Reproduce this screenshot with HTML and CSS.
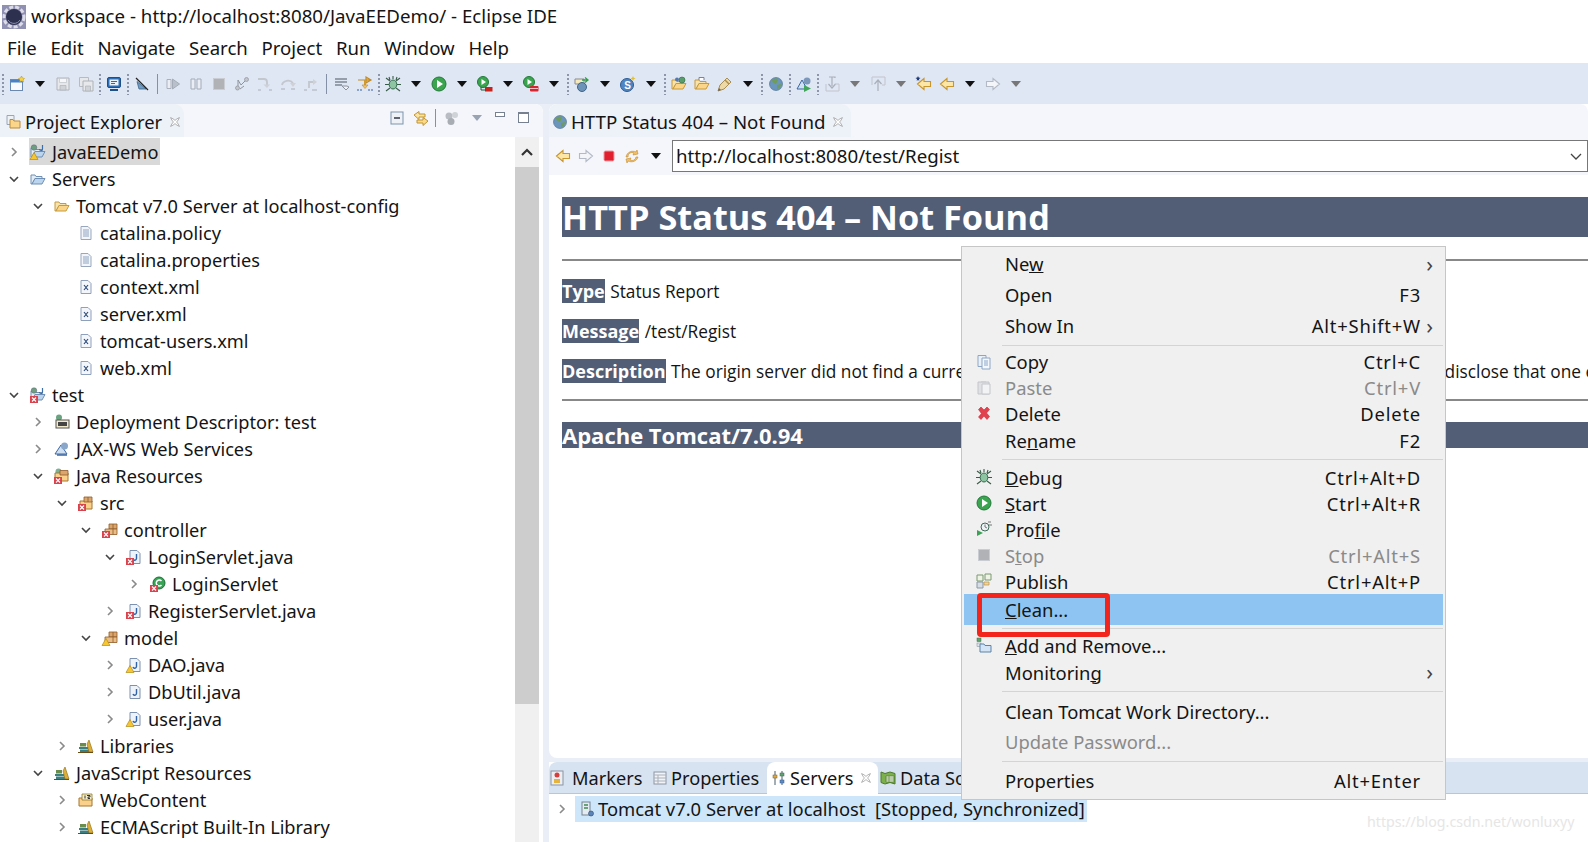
FILE: index.html
```html
<!DOCTYPE html>
<html lang="en">
<head>
<meta charset="utf-8">
<title>workspace - Eclipse IDE</title>
<link rel="stylesheet" href="styles.css">
</head>
<body>
<svg class="defs" width="0" height="0" aria-hidden="true">
<defs>
<g id="chev-r"><path d="M6 4l4 4-4 4" fill="none" stroke="#8a8a8a" stroke-width="1.6"/></g>
<g id="chev-d"><path d="M4 6l4 4 4-4" fill="none" stroke="#444" stroke-width="1.6"/></g>
<g id="err"><rect x="0" y="9" width="8" height="7" fill="#d9434e"/><path d="M2 10.500l4 4m0-4l-4 4" stroke="#fff" stroke-width="1.100"/></g>
<g id="warn"><path d="M4 8.500L8 15.500H0z" fill="#f6c733" stroke="#b58a10" stroke-width=".7"/></g>
<g id="fold-y"><path d="M1 13V4h4l1 1.500h6v2H5L2 13z" fill="#f7e3ad" stroke="#c79a3c"/><path d="M2 13l3-5.500h10L12 13z" fill="#fbd68a" stroke="#c79a3c"/></g>
<g id="fold-b"><path d="M1 13V4h4l1 1.500h6v2H5L2 13z" fill="#e3edf8" stroke="#6f8fb4"/><path d="M2 13l3-5.500h10L12 13z" fill="#bcd5ef" stroke="#6f8fb4"/></g>
<g id="proj"><use href="#fold-b"/><circle cx="4" cy="3.500" r="2.800" fill="#6d9e7f" stroke="#557" stroke-width=".4"/><path d="M12.500 1v4a1.500 1.500 0 0 1-3 0" fill="none" stroke="#3e6ea8" stroke-width="1.200"/></g>
<g id="txt"><path d="M3 1.500h7l3 3v10H3z" fill="#f2f5fa" stroke="#98a7bd"/><path d="M5 5h6M5 7h6M5 9h6M5 11h6" stroke="#8ea4c2"/></g>
<g id="xml"><path d="M3 1.500h7l3 3v10H3z" fill="#f3f6fb" stroke="#8ea0bb"/><path d="M6 6l4 5m0-5l-4 5" stroke="#2d4a78" stroke-width="1.200"/></g>
<g id="dd"><circle cx="5" cy="3.500" r="3" fill="#6aa37f"/><rect x="2" y="6" width="13" height="8" fill="#f2e9c8" stroke="#555"/><rect x="4" y="8" width="9" height="4" fill="#444"/></g>
<g id="ws"><path d="M1 13L7 4l6 9z" fill="#cfe0f3" stroke="#3b66a3"/><circle cx="10.500" cy="5" r="3.500" fill="#8aa6c8"/><path d="M3 14h10" stroke="#3b66a3" stroke-width="1.500"/></g>
<g id="box"><path d="M7 2h8v5h-8z" fill="#dba66d" stroke="#8f5a2a" stroke-width=".8"/><path d="M3 7h12v5.500H3z" fill="#e9bd87" stroke="#8f5a2a" stroke-width=".8"/><path d="M11 2v10.500" stroke="#8f5a2a" stroke-width=".8"/></g>
<g id="jres"><circle cx="4.500" cy="3.500" r="3" fill="#7bb196"/><path d="M1 13V5h13v8z" fill="#fad08a" stroke="#a87631"/><path d="M6 2.500h8V7H6z" fill="#dba66d" stroke="#8f5a2a" stroke-width=".8"/></g>
<g id="src"><path d="M2 14V6h12v8z" fill="#fad08a" stroke="#a87631"/><path d="M6 2h8v5H6z" fill="#dba66d" stroke="#8f5a2a" stroke-width=".8"/><path d="M10 2v5" stroke="#8f5a2a" stroke-width=".8"/></g>
<g id="java"><path d="M4 1.500h7l3 3v10H4z" fill="#eef3fa" stroke="#7d90ae"/><path d="M10.500 5v4.500a1.800 1.800 0 0 1-3.500 .5" fill="none" stroke="#2f62a8" stroke-width="1.400"/></g>
<g id="cls"><circle cx="9" cy="7" r="6" fill="#37a354" stroke="#1c6f34"/><path d="M11.500 5a3 3 0 1 0 0 4" fill="none" stroke="#fff" stroke-width="1.500"/></g>
<g id="lib"><path d="M1 9h9v2H1zM2 11.500h9V14H2z" fill="#3b7f80"/><path d="M2 5h6v3.500H2z" fill="#6a8c4c"/><path d="M11 2l4 12h-4l-2-8z" fill="#ddae3a" stroke="#8a6a14" stroke-width=".6"/><path d="M0 14.500h15" stroke="#6a4a15"/></g>
<g id="jsf"><path d="M1 14V6h13v8z" fill="#fad08a" stroke="#a87631"/><path d="M4 2h10v6H4z" fill="#f4ecc9" stroke="#8f7a2a" stroke-width=".8"/><path d="M7 3.500v3M9 3.500h3v1.500h-2v1.500h2" fill="none" stroke="#333" stroke-width="1"/></g>
<g id="srvr"><rect x="3" y="1" width="8" height="13" fill="#e5ebf2" stroke="#75838f"/><path d="M5 4h4M5 7h4" stroke="#3e8a52" stroke-width="1.400"/><circle cx="12" cy="12.500" r="2.500" fill="#5b84b8" stroke="#2e4a70" stroke-width=".6"/></g>
<g id="close"><path d="M2.500 2.500l3 1.500 2.500 2 2.500-2 3-1.500-1.500 3-2 2.500 2 2.500 1.500 3-3-1.500-2.500-2-2.500 2-3 1.500 1.500-3 2-2.500-2-2.500z" fill="#fff" stroke="#8b8b8b" stroke-width=".8"/></g>
<g id="pe"><path d="M2 1.500h7v9H2z" fill="#eef1f6" stroke="#9aa6b5"/><path d="M5 8V5.500h3l1 1.500h6v7H5z" fill="#fbd68a" stroke="#b98b36"/></g>
<g id="globe"><circle cx="8" cy="8" r="6.500" fill="#6b96bc" stroke="#45688c" stroke-width=".6"/><path d="M4 4l4-2 2 2-2 4-3-1zM9 9l4-1-1 4-3 1z" fill="#6f9c58"/></g>
<g id="back"><path d="M1.500 8L8 2.500V5.500h6.500v5H8v3z" fill="#fde7a8" stroke="#c7962d" stroke-width="1.100"/></g>
<g id="fwd"><path d="M14.500 8L8 2.500V5.500H1.500v5H8v3z" fill="#f3f5f9" stroke="#b3bac6" stroke-width="1.100"/></g>
<g id="refresh"><path d="M4 9a4 4 0 0 1 6-4l-1 2 5-1-1-4-1 2C8 2 3 4 2 9z" fill="#f4c067" stroke="#c38a2c" stroke-width=".6"/><path d="M12 9a4 4 0 0 1-6 3l1-2-5 1 1 4 1-2c4 2 9 0 10-4z" fill="#f4c067" stroke="#c38a2c" stroke-width=".6"/></g>
<g id="stoprd"><rect x="3" y="3" width="10" height="10" rx="1.500" fill="#e0202e" stroke="#f09aa0"/></g>
<g id="newwiz"><rect x="1.500" y="3.500" width="12" height="11" fill="#f7f9fc" stroke="#6a89b0"/><path d="M1.500 4h12v2.500h-12z" fill="#4a81c4"/><path d="M12.500 0l1 2 2 .5-1.500 1.500.5 2-2-1-2 1 .5-2L9.500 2.500l2-.5z" fill="#f6d44a" stroke="#b48d18" stroke-width=".5"/></g>
<g id="save"><path d="M2 2h12v12H2z" fill="#e6e8ec" stroke="#b0b4ba"/><path d="M4.500 2.500h7v4h-7z" fill="#f6f7f9" stroke="#c0c4ca" stroke-width=".7"/><path d="M5 9.500h6V14H5z" fill="#d0d3d8" stroke="#b0b4ba" stroke-width=".7"/></g>
<g id="saveall"><path d="M1.500 1.500h9v9h-9z" fill="#e6e8ec" stroke="#b8bcc2"/><path d="M5 5h10v10H5z" fill="#e6e8ec" stroke="#aeb2b8"/><path d="M7.500 10h5v5h-5z" fill="#d0d3d8" stroke="#b0b4ba" stroke-width=".7"/></g>
<g id="monitor"><rect x="1.500" y="1.500" width="13" height="10" rx="1.500" fill="#2c6db4" stroke="#1d4f88"/><rect x="3.500" y="3.500" width="9" height="6" fill="#eaf1f9"/><path d="M5 5.500h6M5 7.500h4" stroke="#2c6db4"/><path d="M4 14h8" stroke="#1d4f88" stroke-width="2"/></g>
<g id="skip"><path d="M3 5.500L12 13 5 13z" fill="#6f9cc4" stroke="#3b6488" stroke-width=".8"/><path d="M2 2l12 12" stroke="#222" stroke-width="1.300"/></g>
<g id="resume"><path d="M2 3.500h4v9H2z" fill="#eaedf3" stroke="#aab1bd"/><path d="M7.500 3l7 5-7 5z" fill="#b9c0cb" stroke="#a4acb8"/></g>
<g id="suspend"><path d="M3 3h4v10H3zM9 3h4v10H9z" fill="#eaedf3" stroke="#a4acb8"/></g>
<g id="stopg"><rect x="2.500" y="2.500" width="11" height="11" fill="#b0b2b6" stroke="#c9ccd2"/></g>
<g id="disc"><circle cx="3.500" cy="12" r="2" fill="#c2c6cc" stroke="#8f949c" stroke-width=".7"/><circle cx="12.500" cy="3.500" r="2" fill="#c2c6cc" stroke="#8f949c" stroke-width=".7"/><path d="M4 10V4l3 5 4-4M6 13l4-3" fill="none" stroke="#8f949c"/></g>
<g id="into"><path d="M1 3h6a3 3 0 0 1 3 3v3" fill="none" stroke="#c3c7ce" stroke-width="1.800"/><path d="M6.500 8.500H13L10 12z" fill="#ced2d8"/><path d="M1 14h3M12 14h3" stroke="#a9aeb7" stroke-width="1.200"/></g>
<g id="over"><path d="M2 9a6 5 0 0 1 11-2" fill="none" stroke="#c3c7ce" stroke-width="1.800"/><path d="M10 7h6l-3 4z" fill="#ced2d8"/><path d="M1 13h4M11 13h4" stroke="#a9aeb7" stroke-width="1.200"/></g>
<g id="ret"><path d="M6 12V6h5" fill="none" stroke="#c3c7ce" stroke-width="1.800"/><path d="M10 3l4 3-4 3z" fill="#ced2d8"/><path d="M1 14h3M9 14h5" stroke="#a9aeb7" stroke-width="1.200"/></g>
<g id="filt"><path d="M1 3h12M1 6h12M1 9h7" stroke="#7f8794" stroke-width="1.500"/><path d="M8 10l4 4 3-3-2-1z" fill="#eef1f5" stroke="#8b93a0"/></g>
<g id="stepf"><path d="M1 4h13M9 1l5 3-5 3z" fill="#f2c266" stroke="#c08b2a" stroke-width="1.200"/><path d="M8 4v6" stroke="#d19b34" stroke-width="2"/><path d="M5 9h6l-3 3.500z" fill="#f2c266" stroke="#c08b2a" stroke-width=".6"/><path d="M0 14h5M11 14h5" stroke="#3a61a0" stroke-width="1.200" stroke-dasharray="2 1"/></g>
<g id="debug"><path d="M1 2l4 3M15 2l-4 3M0 8.500h4M12 8.500h4M1 15l4-3M15 15l-4-3M8 0v3M4 1l1 3M12 1l-1 3" stroke="#375c47" stroke-width="1.100"/><ellipse cx="8" cy="8.500" rx="3.800" ry="4.500" fill="#8fc4a3" stroke="#2f6a4b"/></g>
<g id="run"><circle cx="8" cy="8" r="7" fill="#3aa54e" stroke="#22793a"/><path d="M6 4l6 4-6 4z" fill="#fff"/></g>
<g id="runsv"><circle cx="6" cy="6" r="5.500" fill="#3aa54e" stroke="#22793a"/><path d="M4.500 3l4.500 3-4.500 3z" fill="#fff"/><rect x="8" y="11" width="7.500" height="4.500" fill="#c8241e"/><path d="M4 11v3h5" fill="none" stroke="#215a2e"/></g>
<g id="runext"><circle cx="6" cy="6" r="5.500" fill="#3aa54e" stroke="#22793a"/><path d="M4.500 3l4.500 3-4.500 3z" fill="#fff"/><rect x="7" y="10" width="8.500" height="5.500" rx="1" fill="#d8242e"/><path d="M7 12.500h8" stroke="#fff" stroke-width=".7"/></g>
<g id="newsv"><path d="M1 3h9v5H1z" fill="#f6e9bb" stroke="#8b8b8b"/><circle cx="8" cy="11" r="4.500" fill="#6d93b8" stroke="#3f6488"/><path d="M8 4h5M11 1.500l3 2.500-3 2.500" fill="none" stroke="#3a9b4e" stroke-width="1.300"/></g>
<g id="sver"><circle cx="7" cy="9" r="6.500" fill="#4f86c2" stroke="#2e5c92"/><text x="4.200" y="12.800" class="svgt">S</text><path d="M13 0l.8 1.700 1.700.8-1.700.8-.8 1.700-.8-1.700-1.700-.8 1.700-.8z" fill="#e0c033"/></g>
<g id="openproj"><use href="#fold-y"/><circle cx="11" cy="4" r="3" fill="#5a9d6c" stroke="#2c6a3d" stroke-width=".6"/><circle cx="6" cy="3.500" r="2" fill="#5577aa"/></g>
<g id="opentask"><use href="#fold-y"/><path d="M5 4V1.500h5V4" fill="#fff" stroke="#7a8494"/></g>
<g id="pen"><path d="M1 15l2-6 7-7 4 4-7 7z" fill="#ecd9a7" stroke="#a88d55"/><path d="M8 4l4 4" stroke="#b08e46" stroke-width="1.500"/><path d="M1 15l1-3 2 2z" fill="#666"/></g>
<g id="wsrun"><path d="M1 13L6 4l5 9z" fill="#cfe0f3" stroke="#3b66a3"/><circle cx="11" cy="5" r="3.500" fill="#7b97ba"/><path d="M8 9l7 3.500-7 3.500z" fill="#40a75a"/></g>
<g id="nexta"><path d="M5 1h6v1M8 1v9M4.500 8L8 12l3.500-4" fill="none" stroke="#aab0ba" stroke-width="1.200"/><path d="M2 8v7h13V8h-4" fill="none" stroke="#c0c5cd"/></g>
<g id="preva"><path d="M2 1h13v8h-3M2 1v8" fill="none" stroke="#c0c5cd"/><path d="M8 15V5M4.500 8L8 4l3.500 4" fill="none" stroke="#aab0ba" stroke-width="1.200"/></g>
<g id="backs"><use href="#back"/><path d="M2 0l.7 1.500L4.500 2l-1.500 1 .3 1.700L2 4 .7 4.700 1 3-.5 2l1.800-.5z" fill="#1f3b7a"/></g>
<g id="copy"><path d="M2 1.500h8v11H2z" fill="#eaf0f8" stroke="#8da6c6"/><path d="M6 4h8v11H6z" fill="#f4f7fb" stroke="#8da6c6"/><path d="M8 7h4M8 9h4M8 11h4" stroke="#8da6c6"/></g>
<g id="paste"><path d="M2 3h11v12H2z" fill="#dfe1e4" stroke="#c3c6ca"/><path d="M6 5h8v10H6z" fill="#f2f3f4" stroke="#c3c6ca"/><path d="M5 2h5v2H5z" fill="#cfd1d4"/></g>
<g id="delx"><path d="M2.500 4.500L5 2l3 3 3-3 2.500 2.500-3 3.500 3 3.500L11 14.500l-3-3.500-3 3.500L2.500 12l3-3.500z" fill="#e2414e" stroke="#c92a38" stroke-width=".6"/></g>
<g id="prof"><path d="M1 15V9l6 3z" fill="#3ba255"/><circle cx="9" cy="6" r="4" fill="#eef2f5" stroke="#3d6b57"/><path d="M9 3.500V6l2 1M12 1h3M13 4h3" fill="none" stroke="#555" stroke-width=".8"/></g>
<g id="pub"><path d="M1 2h6v6H1zM9 1h6v6H9z" fill="#eef3e5" stroke="#7b9a70"/><path d="M1 9h6v6H1z" fill="#d7dde4" stroke="#8a97a5"/><path d="M8 9h5v3H8z" fill="#f2d49a" stroke="#b7934d" stroke-width=".7"/></g>
<g id="addrm"><rect x="1" y="1" width="4" height="3.500" fill="#5fa36f" stroke="#3f6b4c" stroke-width=".5"/><rect x="1" y="6" width="4" height="3.500" fill="#dde3ea" stroke="#7d8896" stroke-width=".5"/><path d="M4 7h4l1 1.500h6V15H4z" fill="#d2e4f5" stroke="#5f83a8"/></g>
<g id="markers"><rect x="2" y="1" width="12" height="14" fill="#eceef2" stroke="#8a94a3"/><circle cx="8" cy="5" r="2.500" fill="#d63d3d"/><rect x="5" y="9" width="6" height="4" fill="#e6b43c"/></g>
<g id="props"><rect x="2" y="2" width="12" height="12" fill="#f1f3f6" stroke="#8c96a4"/><path d="M2 5h12M2 8h12M2 11h12M6 5v9" stroke="#a9b1bc"/></g>
<g id="servers"><path d="M4 1v14M11 1v14" stroke="#4a5a6b"/><rect x="2" y="5" width="4" height="3" fill="#e3a93a" stroke="#7a5a1d" stroke-width=".5"/><rect x="9" y="3" width="4" height="3" fill="#5fa36f" stroke="#3f6b4c" stroke-width=".5"/><rect x="9" y="10" width="4" height="3" fill="#5e8cc4" stroke="#395d8c" stroke-width=".5"/></g>
<g id="dsrc"><path d="M1 2l4 1.500 5-1.500 5 1.500V14l-5-1.500L5 14l-4-1.500z" fill="#7cb04d" stroke="#4d7a2b"/><path d="M6 6h8v6H6z" fill="#e8efdd" stroke="#4d7a2b" stroke-width=".7"/><path d="M6 8h8M6 10h8M9 6v6" stroke="#4d7a2b" stroke-width=".6"/></g>
<g id="collapse"><rect x="2" y="2" width="12" height="12" fill="#eef2f7" stroke="#7d93ad"/><path d="M5 8h6" stroke="#334" stroke-width="1.300"/></g>
<g id="link"><path d="M1 5l5-3.500V4h6v3H6v2.500z" fill="#fbe3a0" stroke="#c29433"/><path d="M15 11l-5-3.500V10H4v3h6v2.500z" fill="#fbd98a" stroke="#c29433"/></g>
<g id="vfilter"><circle cx="5" cy="6" r="3.500" fill="#b9bdc3"/><circle cx="11" cy="5" r="3" fill="#cfd2d6"/><circle cx="7" cy="11.500" r="3.500" fill="#a8adb4"/></g>
</defs>
</svg>

<div class="app">
  <header class="titlebar">
    <svg class="appicon" width="24" height="24"><rect width="24" height="24" fill="#8f90b2"/><circle cx="12" cy="12" r="10" fill="none" stroke="#dcdce8" stroke-width="3" stroke-dasharray="4 2"/><circle cx="12" cy="12" r="8" fill="#2e3050"/><path d="M6 15a7 7 0 0 0 12 0" fill="none" stroke="#8d8fb0"/></svg>
    <span>workspace - http://localhost:8080/JavaEEDemo/ - Eclipse IDE</span>
  </header>
  <nav class="menubar">
    <span>File</span><span>Edit</span><span>Navigate</span><span>Search</span><span>Project</span><span>Run</span><span>Window</span><span>Help</span>
  </nav>
  <div class="toolbar">
    <i class="grip"></i>
    <span class="tb"><svg class="i"><use href="#newwiz"/></svg></span><b class="dd"></b>
    <span class="tb"><svg class="i"><use href="#save"/></svg></span>
    <span class="tb"><svg class="i"><use href="#saveall"/></svg></span><i class="grip"></i>
    <span class="tb"><svg class="i"><use href="#monitor"/></svg></span><i class="grip"></i>
    <span class="tb"><svg class="i"><use href="#skip"/></svg></span><i class="vsep"></i>
    <span class="tb"><svg class="i"><use href="#resume"/></svg></span>
    <span class="tb"><svg class="i"><use href="#suspend"/></svg></span>
    <span class="tb"><svg class="i"><use href="#stopg"/></svg></span>
    <span class="tb"><svg class="i"><use href="#disc"/></svg></span>
    <span class="tb"><svg class="i"><use href="#into"/></svg></span>
    <span class="tb"><svg class="i"><use href="#over"/></svg></span>
    <span class="tb"><svg class="i"><use href="#ret"/></svg></span><i class="vsep"></i>
    <span class="tb"><svg class="i"><use href="#filt"/></svg></span>
    <span class="tb"><svg class="i"><use href="#stepf"/></svg></span><i class="grip"></i>
    <span class="tb"><svg class="i"><use href="#debug"/></svg></span><b class="dd"></b>
    <span class="tb"><svg class="i"><use href="#run"/></svg></span><b class="dd"></b>
    <span class="tb"><svg class="i"><use href="#runsv"/></svg></span><b class="dd"></b>
    <span class="tb"><svg class="i"><use href="#runext"/></svg></span><b class="dd"></b><i class="grip"></i>
    <span class="tb"><svg class="i"><use href="#newsv"/></svg></span><b class="dd"></b>
    <span class="tb"><svg class="i"><use href="#sver"/></svg></span><b class="dd"></b><i class="grip"></i>
    <span class="tb"><svg class="i"><use href="#openproj"/></svg></span>
    <span class="tb"><svg class="i"><use href="#opentask"/></svg></span>
    <span class="tb"><svg class="i"><use href="#pen"/></svg></span><b class="dd"></b><i class="grip"></i>
    <span class="tb"><svg class="i"><use href="#globe"/></svg></span><i class="grip"></i>
    <span class="tb"><svg class="i"><use href="#wsrun"/></svg></span><i class="grip"></i>
    <span class="tb"><svg class="i"><use href="#nexta"/></svg></span><b class="dd off"></b>
    <span class="tb"><svg class="i"><use href="#preva"/></svg></span><b class="dd off"></b>
    <span class="tb"><svg class="i"><use href="#backs"/></svg></span>
    <span class="tb"><svg class="i"><use href="#back"/></svg></span><b class="dd"></b>
    <span class="tb"><svg class="i"><use href="#fwd"/></svg></span><b class="dd off"></b>
  </div>

  <main class="main">
    <section class="left">
      <div class="viewhead">
        <div class="tab tab-pe"><svg class="i"><use href="#pe"/></svg><span>Project Explorer</span><svg class="x"><use href="#close"/></svg></div>
        <div class="viewacts">
          <svg class="i"><use href="#collapse"/></svg>
          <svg class="i a-link"><use href="#link"/></svg>
          <i class="vsep small"></i>
          <svg class="i a-filter"><use href="#vfilter"/></svg>
          <b class="dd hollow"></b>
          <b class="minbtn"></b>
          <b class="maxbtn"></b>
        </div>
      </div>
      <div class="treewrap">
        <div class="tree">
          <div class="row l0"><svg class="c"><use href="#chev-r"/></svg><span class="selbg"><svg class="i"><use href="#proj"/><use href="#warn"/></svg><span>JavaEEDemo</span></span></div>
          <div class="row l0"><svg class="c"><use href="#chev-d"/></svg><svg class="i"><use href="#fold-b"/></svg><span>Servers</span></div>
          <div class="row l1"><svg class="c"><use href="#chev-d"/></svg><svg class="i"><use href="#fold-y"/></svg><span>Tomcat v7.0 Server at localhost-config</span></div>
          <div class="row l2"><i class="c"></i><svg class="i"><use href="#txt"/></svg><span>catalina.policy</span></div>
          <div class="row l2"><i class="c"></i><svg class="i"><use href="#txt"/></svg><span>catalina.properties</span></div>
          <div class="row l2"><i class="c"></i><svg class="i"><use href="#xml"/></svg><span>context.xml</span></div>
          <div class="row l2"><i class="c"></i><svg class="i"><use href="#xml"/></svg><span>server.xml</span></div>
          <div class="row l2"><i class="c"></i><svg class="i"><use href="#xml"/></svg><span>tomcat-users.xml</span></div>
          <div class="row l2"><i class="c"></i><svg class="i"><use href="#xml"/></svg><span>web.xml</span></div>
          <div class="row l0"><svg class="c"><use href="#chev-d"/></svg><svg class="i"><use href="#proj"/><use href="#err"/></svg><span>test</span></div>
          <div class="row l1"><svg class="c"><use href="#chev-r"/></svg><svg class="i"><use href="#dd"/></svg><span>Deployment Descriptor: test</span></div>
          <div class="row l1"><svg class="c"><use href="#chev-r"/></svg><svg class="i"><use href="#ws"/></svg><span>JAX-WS Web Services</span></div>
          <div class="row l1"><svg class="c"><use href="#chev-d"/></svg><svg class="i"><use href="#jres"/><use href="#err"/></svg><span>Java Resources</span></div>
          <div class="row l2"><svg class="c"><use href="#chev-d"/></svg><svg class="i"><use href="#src"/><use href="#err"/></svg><span>src</span></div>
          <div class="row l3"><svg class="c"><use href="#chev-d"/></svg><svg class="i"><use href="#box"/><use href="#err"/></svg><span>controller</span></div>
          <div class="row l4"><svg class="c"><use href="#chev-d"/></svg><svg class="i"><use href="#java"/><use href="#err"/></svg><span>LoginServlet.java</span></div>
          <div class="row l5"><svg class="c"><use href="#chev-r"/></svg><svg class="i"><use href="#cls"/><use href="#err"/></svg><span>LoginServlet</span></div>
          <div class="row l4"><svg class="c"><use href="#chev-r"/></svg><svg class="i"><use href="#java"/><use href="#err"/></svg><span>RegisterServlet.java</span></div>
          <div class="row l3"><svg class="c"><use href="#chev-d"/></svg><svg class="i"><use href="#box"/><use href="#warn"/></svg><span>model</span></div>
          <div class="row l4"><svg class="c"><use href="#chev-r"/></svg><svg class="i"><use href="#java"/><use href="#warn"/></svg><span>DAO.java</span></div>
          <div class="row l4"><svg class="c"><use href="#chev-r"/></svg><svg class="i"><use href="#java"/></svg><span>DbUtil.java</span></div>
          <div class="row l4"><svg class="c"><use href="#chev-r"/></svg><svg class="i"><use href="#java"/><use href="#warn"/></svg><span>user.java</span></div>
          <div class="row l2"><svg class="c"><use href="#chev-r"/></svg><svg class="i"><use href="#lib"/></svg><span>Libraries</span></div>
          <div class="row l1"><svg class="c"><use href="#chev-d"/></svg><svg class="i"><use href="#lib"/></svg><span>JavaScript Resources</span></div>
          <div class="row l2"><svg class="c"><use href="#chev-r"/></svg><svg class="i"><use href="#jsf"/></svg><span>WebContent</span></div>
          <div class="row l2"><svg class="c"><use href="#chev-r"/></svg><svg class="i"><use href="#lib"/></svg><span>ECMAScript Built-In Library</span></div>
        </div>
        <div class="scrollbar">
          <div class="sbup"><svg width="16" height="16"><path d="M3 11l5-5 5 5" fill="none" stroke="#333" stroke-width="2.200"/></svg></div>
          <div class="sbthumb"></div>
        </div>
      </div>
    </section>

    <section class="right">
      <div class="editor">
        <div class="viewhead">
          <div class="tab tab-http"><svg class="i"><use href="#globe"/></svg><span>HTTP Status 404 – Not Found</span><svg class="x"><use href="#close"/></svg></div>
        </div>
        <div class="browserbar">
          <span class="bb"><svg class="i"><use href="#back"/></svg></span>
          <span class="bb"><svg class="i"><use href="#fwd"/></svg></span>
          <span class="bb"><svg class="i"><use href="#stoprd"/></svg></span>
          <span class="bb"><svg class="i"><use href="#refresh"/></svg></span>
          <b class="dd"></b>
          <div class="addr"><span>http://localhost:8080/test/Regist</span><svg width="16" height="16"><path d="M3 6l5 5 5-5" fill="none" stroke="#444" stroke-width="1.300"/></svg></div>
        </div>
        <article class="page">
          <h1>HTTP Status 404 – Not Found</h1>
          <hr>
          <p><b>Type</b> Status Report</p>
          <p><b>Message</b> /test/Regist</p>
          <p><b>Description</b> The origin server did not find a current representation for the target resource or is not willing to disclose that one exists.</p>
          <hr class="hr2">
          <h3>Apache Tomcat/7.0.94</h3>
        </article>
      </div>
      <div class="bottom">
        <div class="btabs">
          <div class="btab b-markers"><svg class="i"><use href="#markers"/></svg><span>Markers</span></div>
          <div class="btab b-props"><svg class="i"><use href="#props"/></svg><span>Properties</span></div>
          <div class="btab b-servers"><svg class="i"><use href="#servers"/></svg><span>Servers</span><svg class="x"><use href="#close"/></svg></div>
          <div class="btab b-data"><svg class="i"><use href="#dsrc"/></svg><span>Data Source Explorer</span></div>
        </div>
        <div class="srvrow">
          <svg class="c"><use href="#chev-r"/></svg>
          <div class="srvsel"><svg class="i"><use href="#srvr"/></svg><span>Tomcat v7.0 Server at localhost  [Stopped, Synchronized]</span></div>
        </div>
      </div>
    </section>
  </main>

  <div class="ctx">
    <div class="mi tall"><i class="mic"></i><span class="lb">Ne<u>w</u></span><span class="ar">›</span></div>
    <div class="mi tall"><i class="mic"></i><span class="lb">Open</span><span class="sc">F3</span></div>
    <div class="mi tall"><i class="mic"></i><span class="lb">Show In</span><span class="sc">Alt+Shift+W</span><span class="ar">›</span></div>
    <div class="ms"></div>
    <div class="mi short"><svg class="mic"><use href="#copy"/></svg><span class="lb">Copy</span><span class="sc">Ctrl+C</span></div>
    <div class="mi off"><svg class="mic"><use href="#paste"/></svg><span class="lb">Paste</span><span class="sc">Ctrl+V</span></div>
    <div class="mi"><svg class="mic"><use href="#delx"/></svg><span class="lb">Delete</span><span class="sc">Delete</span></div>
    <div class="mi mid"><i class="mic"></i><span class="lb">Re<u>n</u>ame</span><span class="sc">F2</span></div>
    <div class="ms ms-a"></div>
    <div class="mi"><svg class="mic"><use href="#debug"/></svg><span class="lb"><u>D</u>ebug</span><span class="sc">Ctrl+Alt+D</span></div>
    <div class="mi"><svg class="mic"><use href="#run"/></svg><span class="lb"><u>S</u>tart</span><span class="sc">Ctrl+Alt+R</span></div>
    <div class="mi"><svg class="mic"><use href="#prof"/></svg><span class="lb">Pro<u>f</u>ile</span></div>
    <div class="mi off"><svg class="mic"><use href="#stopg"/></svg><span class="lb">S<u>t</u>op</span><span class="sc">Ctrl+Alt+S</span></div>
    <div class="mi"><svg class="mic"><use href="#pub"/></svg><span class="lb">Publish</span><span class="sc">Ctrl+Alt+P</span></div>
    <div class="mi tall hot"><i class="mic"></i><span class="lb"><u>C</u>lean...</span></div>
    <div class="ms ms-b"></div>
    <div class="mi"><svg class="mic"><use href="#addrm"/></svg><span class="lb"><u>A</u>dd and Remove...</span></div>
    <div class="mi mid"><i class="mic"></i><span class="lb">Monitorin<u>g</u></span><span class="ar">›</span></div>
    <div class="ms ms-c"></div>
    <div class="mi snug"><i class="mic"></i><span class="lb">Clean Tomcat Work Directory...</span></div>
    <div class="mi tall off"><i class="mic"></i><span class="lb">Update Password...</span></div>
    <div class="ms"></div>
    <div class="mi tall"><i class="mic"></i><span class="lb">Properties</span><span class="sc">Alt+Enter</span></div>
    <div class="redbox"></div>
  </div>
  <div class="wm">https://blog.csdn.net/wonluxyy</div>
</div>
</body>
</html>
```
FILE: styles.css
```css
* { box-sizing: border-box; }
html, body { margin: 0; padding: 0; background: #fff; }
body { font-family: "Noto Sans", "Open Sans", sans-serif; font-size: 18.2px; color: #141414; overflow: hidden; }
.defs { position: absolute; }
.svgt { font-family: "Liberation Sans", sans-serif; font-size: 10px; font-weight: 700; fill: #fff; }

.app { position: relative; width: 1588px; height: 842px; display: flex; flex-direction: column; overflow: hidden; }

.titlebar { height: 33px; display: flex; align-items: center; gap: 5px; padding: 0 0 0 2px; flex: none; font-size: 18.7px; }
.titlebar span { margin-top: -2px; }
.appicon { flex: none; }
.menubar { height: 30px; display: flex; align-items: center; gap: 13.7px; padding: 0 0 2px 7px; flex: none; font-size: 18.6px; }
.toolbar { height: 41px; background: #dfe6f4; display: flex; align-items: center; padding: 1px 0 0 0; flex: none; }

.i { width: 16px; height: 16px; flex: none; overflow: visible; }
.c { width: 16px; height: 16px; flex: none; display: block; }
.x { width: 16px; height: 16px; flex: none; transform: scale(.8); }
.tb { width: 23px; display: flex; justify-content: center; flex: none; }
.dd { width: 23px; height: 16px; flex: none; display: flex; align-items: center; justify-content: center; }
.dd::before { content: ""; border-left: 5px solid transparent; border-right: 5px solid transparent; border-top: 6px solid #111; }
.dd.off::before { border-top-color: #777; }
.dd.hollow { width: 12px; height: 8px; margin-left: 11px; }
.dd.hollow::before { border-top-color: #9aa3b2; }
.grip { width: 5px; height: 22px; flex: none; background: radial-gradient(circle, #8d96a8 1px, transparent 1.2px) center top / 4px 4px repeat-y; }
.vsep { width: 8px; height: 20px; flex: none; background: linear-gradient(#8490a5, #8490a5) center / 1px 100% no-repeat; }
.vsep.small { width: 7px; height: 18px; margin-left: 3.5px; }

.main { flex: 1; display: flex; background: #eaeef7; min-height: 0; }
.left { width: 543px; flex: none; background: #fff; display: flex; flex-direction: column; border-top-right-radius: 8px; overflow: hidden; }
.right { flex: 1; margin-left: 6px; min-width: 0; display: flex; flex-direction: column; }

.viewhead { height: 33px; flex: none; display: flex; background: #f4f6fb; border-top-right-radius: 8px; }
.tab { display: flex; align-items: center; background: #edf1f8; border-radius: 0 10px 0 0; height: 33px; flex: none; white-space: nowrap; padding-top: 2px; }
.tab-pe { width: 184px; padding-left: 5px; gap: 4px; font-size: 18.4px; }
.tab-pe .x { margin-left: 1px; }
.tab-http { width: 302px; padding-left: 3px; gap: 3px; border-top-left-radius: 8px; font-size: 18.7px; }
.tab-http .x { margin-left: 1px; }
.viewacts { margin-left: auto; display: flex; align-items: center; padding: 0 14px 6px 0; }
.a-link { margin-left: 7.5px; }
.a-filter { margin-left: 5px; }
.minbtn { width: 10px; height: 5px; border: 1px solid #77808e; margin: 0 0 6px 11.5px; background: #fff; }
.maxbtn { width: 11px; height: 11px; border: 1px solid #77808e; border-top-width: 2px; margin-left: 13.5px; background: #fff; }

.treewrap { flex: 1; display: flex; min-height: 0; }
.tree { width: 515px; flex: none; padding-top: 1px; overflow: hidden; }
.row { height: 27px; display: flex; align-items: center; white-space: nowrap; }
.row .i { margin: 0 6px 0 8px; }
.l0 { padding-left: 6px; }
.l1 { padding-left: 30px; }
.l2 { padding-left: 54px; }
.l3 { padding-left: 78px; }
.l4 { padding-left: 102px; }
.l5 { padding-left: 126px; }
.selbg { display: flex; align-items: center; height: 27px; background: #d9d9d9; margin-left: 7px; padding-right: 2px; }
.row .selbg .i { margin-left: 1px; }
.scrollbar { width: 24px; flex: none; background: #f0f0f0; display: flex; flex-direction: column; }
.sbup { height: 30px; display: flex; align-items: center; justify-content: center; }
.sbthumb { height: 537px; background: #cdcdcd; }

.editor { height: 654px; flex: none; background: #fff; display: flex; flex-direction: column; overflow: hidden; border-radius: 8px 0 0 8px; }
.browserbar { height: 38px; flex: none; display: flex; align-items: center; background: #f4f6fb; padding-left: 2px; }
.bb { width: 23px; display: flex; justify-content: center; flex: none; }
.browserbar .dd { width: 20px; margin-left: 3px; }
.addr { flex: 1; margin-left: 6px; height: 32px; border: 1px solid #777; background: #fff; display: flex; align-items: center; justify-content: space-between; padding: 0 3px 0 3px; font-size: 18.7px; }
.addr span { margin-top: -2px; }

.page { flex: 1; padding: 22px 0 0 13px; font-family: "Open Sans", "Noto Sans", sans-serif; font-size: 17.3px; overflow: hidden; white-space: nowrap; }
.page h1 { margin: 0; height: 40px; line-height: 40px; background: #525d76; color: #fff; font-size: 34.3px; font-weight: 700; }
.page hr { margin: 22px 0 18px; height: 2px; border: 0; background: #888; }
.page p { margin: 0 0 15px; height: 25px; line-height: 25px; }
.page p b { background: #525d76; color: #fff; font-weight: 700; font-size: 18px; margin-right: 1px; }
.page .hr2 { margin: 8px 0 21px; }
.page h3 { margin: 0; height: 26px; line-height: 26px; background: #525d76; color: #fff; font-size: 22px; font-weight: 700; }

.bottom { flex: 1; margin-top: 4px; min-height: 0; background: #fff; display: flex; flex-direction: column; }
.btabs { height: 32px; flex: none; display: flex; background: #d8e3f1; border-bottom: 1px solid #b9c6d6; border-radius: 8px 0 0 0; }
.btab { display: flex; align-items: center; height: 32px; flex: none; white-space: nowrap; }
.b-markers { width: 103px; gap: 7px; }
.b-props { width: 115px; gap: 3px; }
.b-servers { width: 111px; background: #fff; border-radius: 8px 8px 0 0; padding-left: 4px; gap: 3px; }
.b-servers .x { margin-left: 2px; }
.b-data { padding-left: 2px; gap: 4px; }
.srvrow { height: 26px; margin-top: 2px; display: flex; align-items: center; padding-left: 5px; }
.srvrow .c { margin-right: 5px; }
.srvsel { display: flex; align-items: center; height: 26px; background: #cde6fa; padding: 0 2px 0 4px; gap: 3px; white-space: pre; font-size: 18.4px; }
.srvsel span { margin-top: -2px; }

.ctx { position: absolute; left: 961px; top: 246px; width: 485px; height: 554px; background: #f0f0f0; border: 1px solid #c6c6c6; padding: 1px 2px 0 2px; font-size: 18.4px; }
.mi { height: 26px; display: flex; align-items: center; white-space: nowrap; position: relative; }
.mi.short { height: 25px; }
.mi.tall { height: 31px; }
.mi.mid { height: 28px; }
.mi.snug { height: 30px; }
.mic { width: 16px; height: 16px; margin: 0 13px 0 12px; flex: none; display: block; }
.lb { flex: 1; }
.sc { flex: none; padding-right: 22px; letter-spacing: .8px; }
.ar { position: absolute; right: 10px; top: 50%; transform: translateY(-54%); font-size: 22px; color: #444; line-height: 1; }
.off { color: #8a8a8a; }
.hot { background: #8ec4f2; padding-bottom: 1px; }
.ms { height: 8px; margin-left: 38px; background: linear-gradient(#d4d4d4, #d4d4d4) center / 100% 1px no-repeat; }
.ms-a { height: 10px; }
.ms-b { height: 7px; }
.ms-c { height: 10px; }
.redbox { position: absolute; left: 15px; top: 346px; width: 133px; height: 44px; border: 5px solid #f3241c; border-radius: 4px; pointer-events: none; }

.wm { position: absolute; left: 1367px; top: 812px; color: #e6e6e6; font-size: 14.2px; white-space: nowrap; }
```
